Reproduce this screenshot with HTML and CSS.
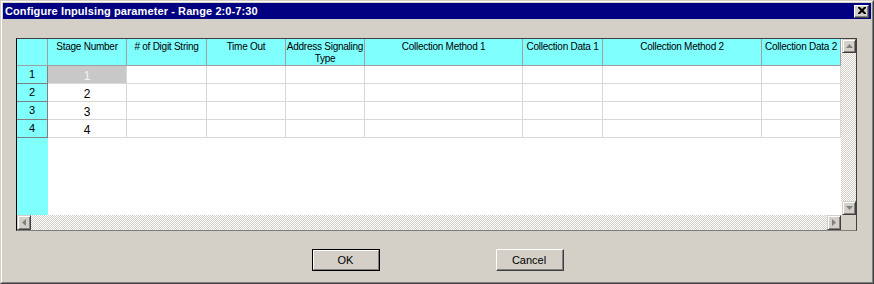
FILE: index.html
```html
<!DOCTYPE html>
<html>
<head>
<meta charset="utf-8">
<link rel="stylesheet" href="styles.css">
</head>
<body>
<div class="window">
  <div class="window-inner">
    <div class="titlebar">
      <span class="title">Configure Inpulsing parameter - Range 2:0-7:30</span>
      <div class="close">
        <svg width="8" height="7" viewBox="0 0 8 7"><path d="M0 0h2l2 2 2-2h2v1l-2.5 2.5L8 6v1H6L4 5 2 7H0V6l2.5-2.5L0 1z" fill="#000"/></svg>
      </div>
    </div>
    <div class="body">
      <div class="gridframe">
        <div class="gridmain">
          <div class="gridarea">
            <table class="grid">
              <colgroup>
                <col class="c-rh"><col class="c79"><col class="c80"><col class="c79"><col class="c79"><col class="c158"><col class="c80"><col class="c159"><col class="c79">
              </colgroup>
              <thead>
                <tr>
                  <th class="rh"></th>
                  <th>Stage Number</th>
                  <th># of Digit String</th>
                  <th>Time Out</th>
                  <th>Address Signaling Type</th>
                  <th>Collection Method 1</th>
                  <th>Collection Data 1</th>
                  <th>Collection Method 2</th>
                  <th>Collection Data 2</th>
                </tr>
              </thead>
              <tbody>
                <tr><td class="rh">1</td><td class="sel">1</td><td></td><td></td><td></td><td></td><td></td><td></td><td></td></tr>
                <tr><td class="rh">2</td><td>2</td><td></td><td></td><td></td><td></td><td></td><td></td><td></td></tr>
                <tr><td class="rh">3</td><td>3</td><td></td><td></td><td></td><td></td><td></td><td></td><td></td></tr>
                <tr><td class="rh">4</td><td>4</td><td></td><td></td><td></td><td></td><td></td><td></td><td></td></tr>
              </tbody>
            </table>
          </div>
          <div class="vscroll">
            <div class="sbtn"><svg width="7" height="4" viewBox="0 0 7 4"><path d="M3.5 0L7 4H0z" fill="#808080"/></svg></div>
            <div class="track"></div>
            <div class="sbtn"><svg width="7" height="4" viewBox="0 0 7 4"><path d="M0 0h7L3.5 4z" fill="#808080"/></svg></div>
          </div>
        </div>
        <div class="hrow">
          <div class="hscroll">
            <div class="sbtn"><svg width="4" height="7" viewBox="0 0 4 7"><path d="M4 0v7L0 3.5z" fill="#808080"/></svg></div>
            <div class="track"></div>
            <div class="sbtn"><svg width="4" height="7" viewBox="0 0 4 7"><path d="M0 0l4 3.5L0 7z" fill="#808080"/></svg></div>
          </div>
          <div class="corner"></div>
        </div>
      </div>
      <div class="buttons">
        <div class="btn default"><div class="btn-face">OK</div></div>
        <div class="btn"><div class="btn-face">Cancel</div></div>
      </div>
    </div>
  </div>
</div>
</body>
</html>
```

FILE: styles.css
```css
* { box-sizing: border-box; }
html, body { margin: 0; padding: 0; }
body {
  width: 874px;
  height: 284px;
  overflow: hidden;
  font-family: "Liberation Sans", Arial, sans-serif;
  font-size: 11px;
  background: #d4d0c8;
}
.window {
  width: 874px;
  height: 284px;
  border: 1px solid;
  border-color: #d4d0c8 #404040 #404040 #d4d0c8;
  background: #d4d0c8;
}
.window-inner {
  height: 100%;
  border: 1px solid;
  border-color: #ffffff #808080 #808080 #ffffff;
  padding: 1px;
  display: flex;
  flex-direction: column;
}
.titlebar {
  height: 16px;
  background: #000080;
  display: flex;
  align-items: center;
  justify-content: space-between;
  padding: 0 2px 0 2px;
}
.title {
  color: #fff;
  font-weight: bold;
  font-size: 11px;
  letter-spacing: 0.1px;
  font-family: "Liberation Sans", Arial, sans-serif;
  line-height: 14px;
  white-space: nowrap;
}
.close {
  width: 15px;
  height: 13px;
  background: #d4d0c8;
  border: 1px solid;
  border-color: #ffffff #404040 #404040 #ffffff;
  box-shadow: inset -1px -1px 0 #808080;
  display: flex;
  align-items: center;
  justify-content: center;
  padding-bottom: 1px;
}
.body {
  flex: 1;
  padding: 19px 14px 0 13px;
  display: flex;
  flex-direction: column;
}
.gridframe {
  width: 841px;
  height: 193px;
  border: 1px solid;
  border-color: #404040 #404040 #808080 #000000;
  display: flex;
  flex-direction: column;
  background: #fff;
}
.gridmain {
  display: flex;
  height: 176px;
}
.gridarea {
  width: 824px;
  height: 176px;
  overflow: hidden;
  background: linear-gradient(to right, #80ffff 31px, #ffffff 31px);
}
.grid {
  border-collapse: separate;
  border-spacing: 0;
  table-layout: fixed;
  width: 824px;
}
.c-rh { width: 31px; }
.c79 { width: 79px; }
.c80 { width: 80px; }
.c158 { width: 158px; }
.c159 { width: 159px; }
.grid th {
  background: #80ffff;
  height: 27px;
  border-right: 1px solid #a0a0a0;
  border-bottom: 1px solid #a0a0a0;
  font-weight: normal;
  font-size: 10px;
  letter-spacing: -0.25px;
  line-height: 12px;
  vertical-align: top;
  text-align: center;
  padding: 2px 0 0 0;
  color: #000;
  white-space: normal;
  overflow: hidden;
}
.grid th:last-child { white-space: nowrap; }
.grid td {
  height: 18px;
  border-right: 1px solid #d8d8d8;
  border-bottom: 1px solid #d8d8d8;
  padding: 0;
  text-align: center;
  font-size: 12px;
  line-height: 14px;
  padding-top: 3px;
  vertical-align: top;
  color: #000;
}
.grid td.rh {
  background: #80ffff;
  border-right: 1px solid #808080;
  border-bottom: 1px solid #808080;
  font-size: 11px;
  padding-top: 1px;
}
.grid td.sel {
  background: #c8c8c8;
  color: #f4f4f4;
}
.vscroll {
  width: 15px;
  display: flex;
  flex-direction: column;
}
.track {
  flex: 1;
  background: repeating-conic-gradient(#d4d0c8 0 25%, #ffffff 0 50%) 0 0 / 2px 2px;
}
.sbtn {
  width: 15px;
  height: 14px;
  background: #d4d0c8;
  border: 1px solid;
  border-color: #d4d0c8 #404040 #404040 #d4d0c8;
  box-shadow: inset 1px 1px 0 #ffffff, inset -1px -1px 0 #808080;
  display: flex;
  align-items: center;
  justify-content: center;
  flex: none;
}
.vscroll .sbtn { margin-left: 1px; width: 14px; }
.hrow {
  display: flex;
  height: 15px;
}
.hscroll {
  width: 824px;
  display: flex;
}
.hscroll .sbtn { height: 15px; width: 14px; }
.corner {
  width: 15px;
  background: #d4d0c8;
}
.buttons {
  display: flex;
  justify-content: center;
  gap: 116px;
  margin-top: 18px;
  padding-left: 2px;
}
.btn {
  width: 68px;
  height: 22px;
  border: 1px solid;
  border-color: #ffffff #404040 #404040 #ffffff;
  background: #d4d0c8;
}
.btn .btn-face {
  height: 100%;
  border-right: 1px solid #808080;
  border-bottom: 1px solid #808080;
  display: flex;
  align-items: center;
  justify-content: center;
  font-size: 11px;
  color: #000;
}
.btn.default {
  border: 1px solid #000;
}
.btn.default .btn-face {
  border: 1px solid;
  border-color: #ffffff #808080 #808080 #ffffff;
}
```
